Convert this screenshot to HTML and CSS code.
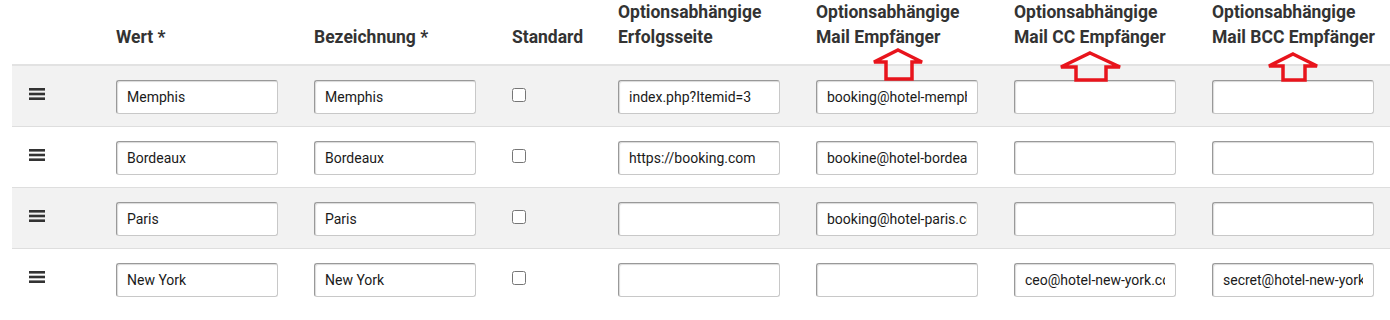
FILE: index.html
```html
<!DOCTYPE html>
<html lang="de">
<head>
    <meta charset="UTF-8">
    <title>Optionen</title>
    <link rel="stylesheet" href="styles.css">
</head>
<body>
    <div class="wrap">
        <table class="options">
            <colgroup>
                <col class="c-drag">
                <col class="c-field">
                <col class="c-field">
                <col class="c-check">
                <col class="c-field">
                <col class="c-field">
                <col class="c-field">
                <col class="c-last">
            </colgroup>
            <thead>
                <tr>
                    <th></th>
                    <th>Wert *</th>
                    <th>Bezeichnung *</th>
                    <th>Standard</th>
                    <th>Optionsabhängige<br>Erfolgsseite</th>
                    <th>Optionsabhängige<br>Mail Empfänger</th>
                    <th>Optionsabhängige<br>Mail CC Empfänger</th>
                    <th>Optionsabhängige<br>Mail BCC Empfänger</th>
                </tr>
            </thead>
            <tbody>
                <tr>
                    <td class="drag"><svg width="16" height="12" viewBox="0 0 16 12"><rect y="0" width="16" height="2.6"/><rect y="4.7" width="16" height="2.6"/><rect y="9.4" width="16" height="2.6"/></svg></td>
                    <td><input type="text" value="Memphis"></td>
                    <td><input type="text" value="Memphis"></td>
                    <td><input type="checkbox"></td>
                    <td><input type="text" value="index.php?Itemid=3"></td>
                    <td><input type="text" value="booking@hotel-memphis.com"></td>
                    <td><input type="text" value=""></td>
                    <td><input type="text" value=""></td>
                </tr>
                <tr>
                    <td class="drag"><svg width="16" height="12" viewBox="0 0 16 12"><rect y="0" width="16" height="2.6"/><rect y="4.7" width="16" height="2.6"/><rect y="9.4" width="16" height="2.6"/></svg></td>
                    <td><input type="text" value="Bordeaux"></td>
                    <td><input type="text" value="Bordeaux"></td>
                    <td><input type="checkbox"></td>
                    <td><input type="text" value="https://booking.com"></td>
                    <td><input type="text" value="bookine@hotel-bordeaux.com"></td>
                    <td><input type="text" value=""></td>
                    <td><input type="text" value=""></td>
                </tr>
                <tr>
                    <td class="drag"><svg width="16" height="12" viewBox="0 0 16 12"><rect y="0" width="16" height="2.6"/><rect y="4.7" width="16" height="2.6"/><rect y="9.4" width="16" height="2.6"/></svg></td>
                    <td><input type="text" value="Paris"></td>
                    <td><input type="text" value="Paris"></td>
                    <td><input type="checkbox"></td>
                    <td><input type="text" value=""></td>
                    <td><input type="text" value="booking@hotel-paris.com"></td>
                    <td><input type="text" value=""></td>
                    <td><input type="text" value=""></td>
                </tr>
                <tr>
                    <td class="drag"><svg width="16" height="12" viewBox="0 0 16 12"><rect y="0" width="16" height="2.6"/><rect y="4.7" width="16" height="2.6"/><rect y="9.4" width="16" height="2.6"/></svg></td>
                    <td><input type="text" value="New York"></td>
                    <td><input type="text" value="New York"></td>
                    <td><input type="checkbox"></td>
                    <td><input type="text" value=""></td>
                    <td><input type="text" value=""></td>
                    <td><input type="text" value="ceo@hotel-new-york.com"></td>
                    <td><input type="text" value="secret@hotel-new-york.com"></td>
                </tr>
            </tbody>
        </table>

        <!-- red markers pointing at the mail columns -->
        <svg class="marks" width="1390" height="90" viewBox="0 0 1390 90">
            <polygon points="898,50 922,62 912,62 912,79 886,79 886,62 874,62"/>
            <polygon points="1090,53 1120,67 1106,67 1106,80 1076,80 1076,67 1061,67"/>
            <polygon points="1293,54 1317,66 1305,66 1305,80 1283,80 1283,66 1269,66"/>
        </svg>
    </div>
</body>
</html>
```

FILE: styles.css
```css
body {
    margin: 0;
    font-family: Roboto, "Liberation Sans", Arial, sans-serif;
    background-color: #fff;
    color: #222;
}

.wrap {
    position: relative;
    padding-left: 12px;
}

.options {
    border-collapse: collapse;
    table-layout: fixed;
    width: 1378px;
}

.c-drag { width: 104px; }
.c-field { width: 198px; }
.c-check { width: 106px; }
.c-last { width: 178px; }

.options th {
    text-align: left;
    vertical-align: bottom;
    font-size: 17.5px;
    font-weight: bold;
    line-height: 25px;
    color: #333;
    padding: 0 0 14px 0;
    white-space: nowrap;
    border-bottom: 2px solid #e2e2e2;
}

.options td {
    height: 58px;
    padding: 2px 0 0 0;
    vertical-align: middle;
    border-top: 1px solid #dedede;
}

.options tbody tr:first-child td {
    border-top: none;
}

.options tbody tr:nth-child(odd) {
    background-color: #f2f2f2;
}

.drag {
    padding-left: 17px !important;
}

.drag svg {
    display: block;
    fill: #333;
    margin-top: -6px;
}

.options input[type="text"] {
    box-sizing: border-box;
    width: 162px;
    height: 34px;
    padding: 0 10px;
    margin: 0;
    border: 1px solid #c8c8c8;
    border-top-color: #999;
    border-left-color: #999;
    border-radius: 3px;
    box-shadow: inset 1px 1px 1px rgba(0, 0, 0, 0.15);
    background: #fff;
    font-family: Roboto, "Liberation Sans", Arial, sans-serif;
    font-size: 14px;
    color: #1a1a1a;
}

.options input[type="checkbox"] {
    margin: -6px 0 0 0;
    width: 14px;
    height: 14px;
    vertical-align: middle;
}

.marks {
    position: absolute;
    left: 0;
    top: 0;
    pointer-events: none;
}

.marks polygon {
    fill: none;
    stroke: #e8141c;
    stroke-width: 3.5;
    stroke-linejoin: miter;
}
```
